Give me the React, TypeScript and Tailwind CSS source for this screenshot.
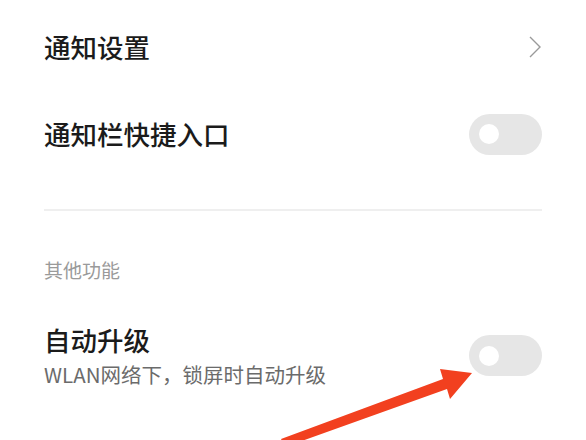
import React from 'react';

const font = { fontFamily: '"Noto Sans CJK SC", "Noto Sans", sans-serif' };

function Toggle() {
  return (
    <div className="flex h-[41px] w-[73px] shrink-0 items-center rounded-full bg-[#e6e6e6] pl-[10px]">
      <div className="h-[20px] w-[20px] rounded-full bg-white" />
    </div>
  );
}

function Chevron() {
  return (
    <svg width="14" height="24" viewBox="0 0 14 24" className="shrink-0">
      <path d="M2 2 L12 12 L2 22" fill="none" stroke="#9a9a9a" strokeWidth="1.4" />
    </svg>
  );
}

export default function App() {
  return (
    <div className="relative h-[440px] w-[586px] overflow-hidden bg-white" style={font}>
      <div className="flex flex-col pl-[44px] pr-[44px]">
        <div className="flex h-[94px] items-center justify-between">
          <span className="text-[26.5px] leading-[34px] font-medium text-[#1b1b1b]">通知设置</span>
          <Chevron />
        </div>

        <div className="flex h-[80px] items-center justify-between">
          <span className="text-[26.5px] leading-[34px] font-medium text-[#1b1b1b]">通知栏快捷入口</span>
          <Toggle />
        </div>

        <div className="mt-[35px] h-[2px] bg-[#efefef]" />

        <div className="mt-[46px] text-[19px] leading-[26px] text-[#9a9a9a]">其他功能</div>

        <div className="mt-[40px] flex items-center justify-between">
          <div className="flex flex-col">
            <span className="text-[26.5px] leading-[34px] font-medium text-[#1b1b1b]">自动升级</span>
            <span className="mt-[3px] text-[20.5px] leading-[28px] text-[#6b6b6b]">WLAN网络下，锁屏时自动升级</span>
          </div>
          <Toggle />
        </div>
      </div>

      <svg className="absolute left-0 top-0" width="586" height="440" viewBox="0 0 586 440">
        <polygon
          points="281,439 443,379 440,369 472,373 450,399 447,389 285,447"
          fill="#f2401f"
        />
      </svg>
    </div>
  );
}
